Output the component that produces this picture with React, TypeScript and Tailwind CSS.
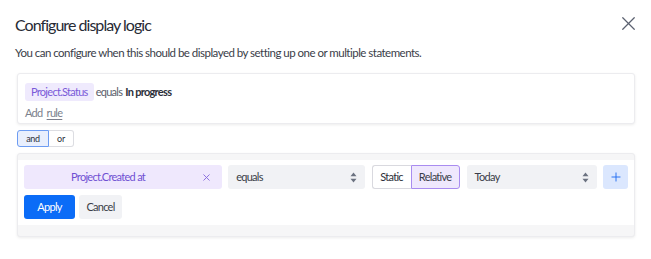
import { X, Plus } from "lucide-react";

function UpDown() {
  return (
    <svg width="7" height="11" viewBox="0 0 7 11" className="text-[#6b7280]">
      <path d="M3.5 0.5 L6.5 4.2 L0.5 4.2 Z" fill="currentColor" />
      <path d="M3.5 10.5 L6.5 6.8 L0.5 6.8 Z" fill="currentColor" />
    </svg>
  );
}

export default function App() {
  return (
    <div className="w-[651px] h-[259px] bg-white font-['Lato',sans-serif] text-[#2d2f3a] overflow-hidden">
      <div className="flex items-start justify-between pl-[15px] pr-[11px]">
        <h1 className="pt-[15px] text-[16px] leading-[20px] tracking-[-0.06em] font-normal text-[#272a35]">Configure display logic</h1>
        <X size={23} strokeWidth={1.3} className="text-[#5b6170] mt-[12px]" />
      </div>
      <p className="pl-[15px] mt-[10px] text-[11.5px] leading-[16px] tracking-[-0.045em] text-[#3a3d48]">
        You can configure when this should be displayed by setting up one or multiple statements.
      </p>

      <div className="pl-[17px] pr-[16px] mt-[12px]">
        <div className="rounded-[3px] border border-[#ececef] shadow-[0_1px_3px_rgba(0,0,0,0.08)] bg-white px-[7px] pt-[9px] pb-[4px] h-[51px] text-[11px] tracking-[-0.065em]">
          <div className="flex items-center gap-[2px]">
            <span className="bg-[#efeafd] text-[#7a5ad9] rounded-[3px] px-[6px] h-[18px] leading-[18px]">Project.Status</span>
            <span className="text-[#5a5e6b]">equals</span>
            <span className="font-bold text-[#2c2f3a] ml-[1px]">In progress</span>
          </div>
          <div className="mt-[4px] leading-[15px] text-[#7b7f8c]">
            Add <span className="underline underline-offset-2 ml-[2px]">rule</span>
          </div>
        </div>

        <div className="flex mt-[6px] text-[9px] leading-none tracking-[-0.03em]">
          <div className="w-[32px] h-[17px] flex items-center justify-center bg-[#e9effd] border border-[#6d9cf2] rounded-l-[3px] text-[#2c2f3a]">and</div>
          <div className="w-[25px] h-[17px] flex items-center justify-center bg-white border border-l-0 border-[#dcdde2] rounded-r-[3px] text-[#2c2f3a]">or</div>
        </div>

        <div className="mt-[6px] rounded-[3px] border border-[#ececef] shadow-[0_1px_3px_rgba(0,0,0,0.08)] bg-[#f6f6f7] pt-[6px] pb-[11px] text-[11px] tracking-[-0.065em]">
          <div className="bg-white px-[6px] pt-[5px] pb-[6px]">
            <div className="flex items-center h-[24px]">
              <div className="w-[199px] h-[24px] bg-[#efe8fd] rounded-[3px] flex items-center text-[#7050d3] relative">
                <span className="flex-1 text-center pr-[30px]">Project.Created at</span>
                <X size={11} strokeWidth={2} className="absolute right-[10px] text-[#8468dc]" />
              </div>
              <div className="ml-[6px] w-[137px] h-[24px] bg-[#f1f2f5] rounded-[3px] flex items-center justify-between pl-[8px] pr-[8px] text-[#3a3d48]">
                <span>equals</span>
                <UpDown />
              </div>
              <div className="ml-[7px] flex h-[24px]">
                <div className="w-[39px] flex items-center justify-center border border-[#d9d9df] border-r-0 rounded-l-[3px] bg-white text-[#2c2f3a]">Static</div>
                <div className="w-[49px] flex items-center justify-center border border-[#a98cf0] rounded-r-[3px] bg-[#efe8fd] text-[#3a3d48]">Relative</div>
              </div>
              <div className="ml-[7px] w-[131px] h-[24px] bg-[#f1f2f5] rounded-[3px] flex items-center justify-between pl-[8px] pr-[8px] text-[#3a3d48]">
                <span>Today</span>
                <UpDown />
              </div>
              <div className="ml-[6px] w-[25px] h-[24px] bg-[#dbe7fe] rounded-[3px] flex items-center justify-center">
                <Plus size={14} strokeWidth={1.6} className="text-[#1f6df2]" />
              </div>
            </div>
            <div className="flex mt-[6px]">
              <button className="w-[51px] h-[24px] rounded-[3px] bg-[#0b6cf7] text-white">Apply</button>
              <button className="ml-[4px] w-[43px] h-[24px] rounded-[3px] bg-[#f1f2f5] text-[#3a3d48]">Cancel</button>
            </div>
          </div>
        </div>
      </div>
    </div>
  );
}
